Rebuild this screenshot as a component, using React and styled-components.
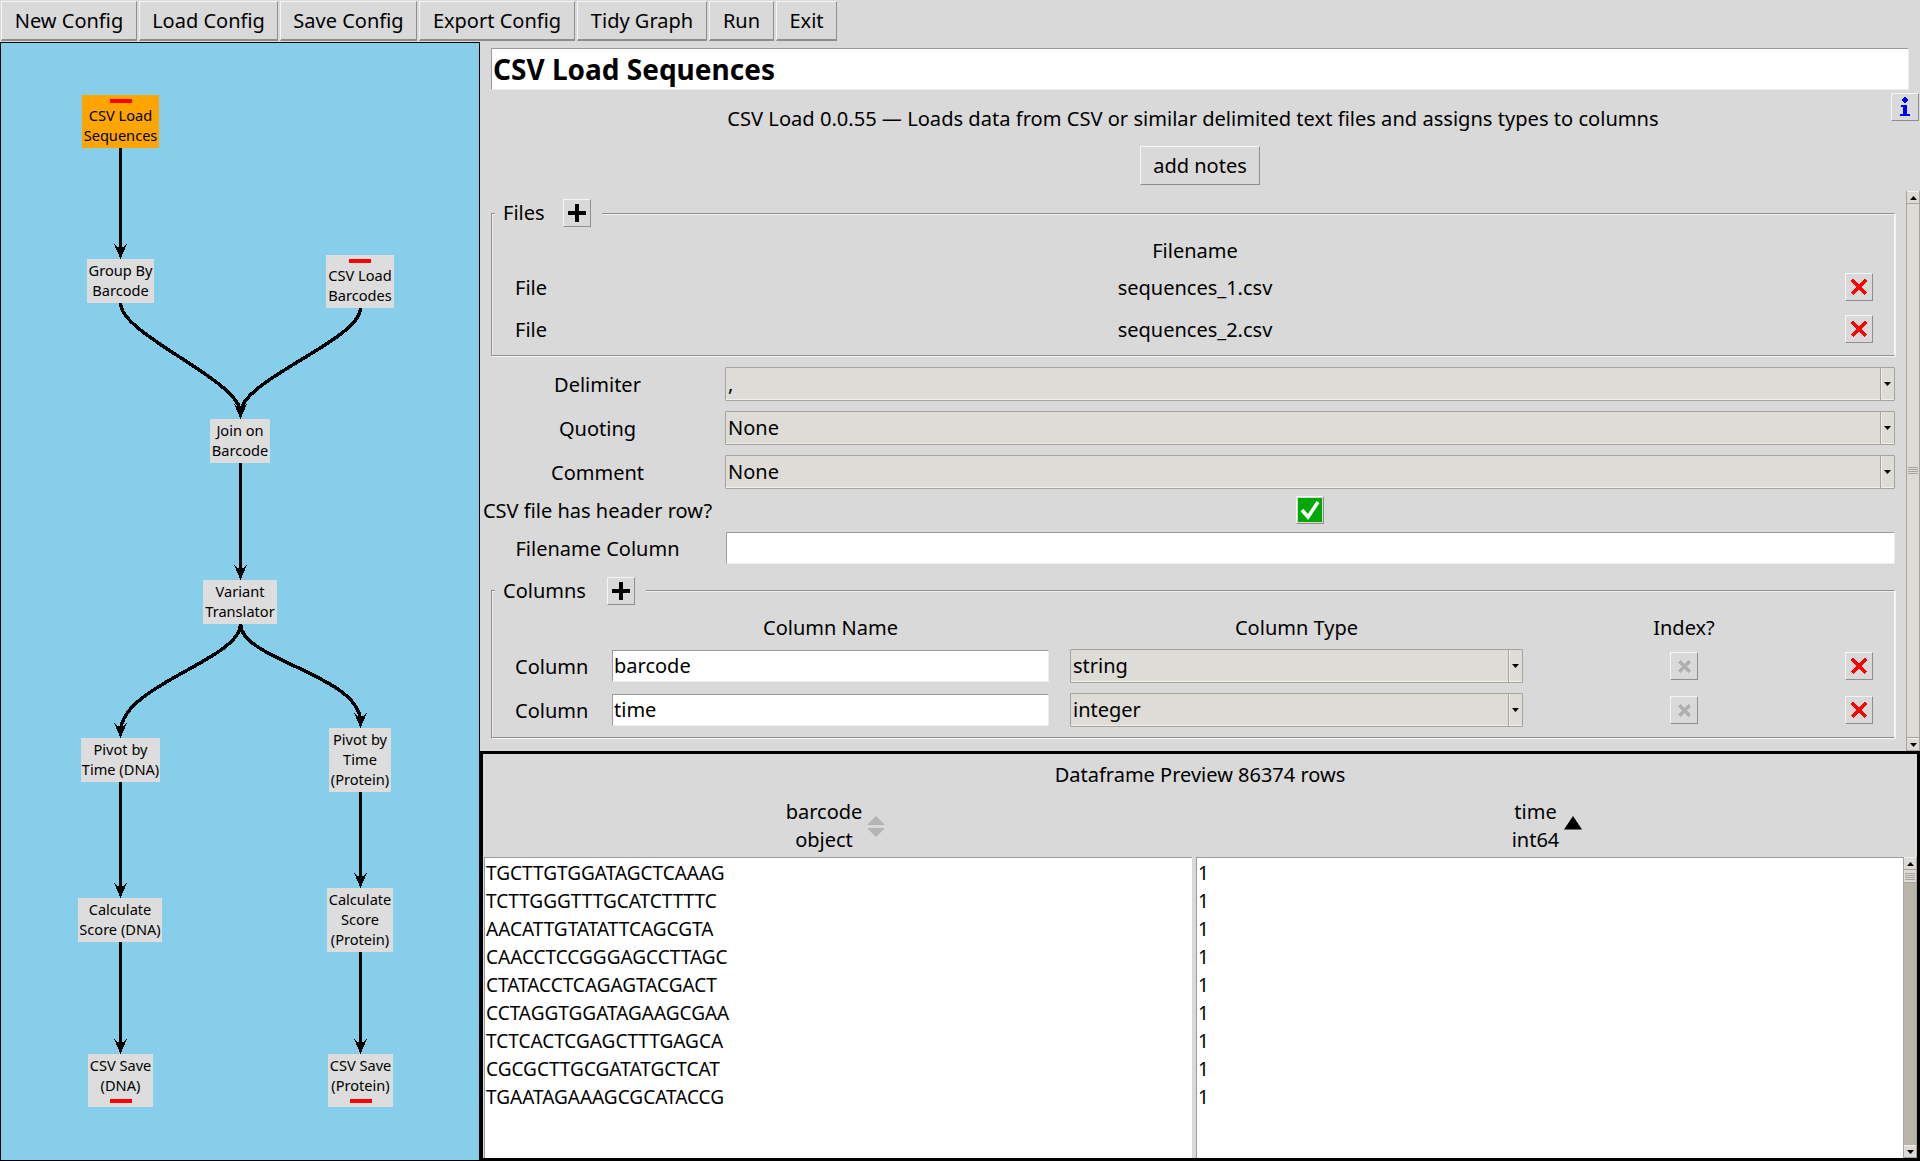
import React from 'react'
import styled, { createGlobalStyle } from 'styled-components'

const GlobalStyle = createGlobalStyle`
  html, body {
    margin: 0;
    padding: 0;
    background: #d9d9d9;
  }
  body {
    font-family: "Noto Sans", sans-serif;
    font-size: 20px;
    color: #000;
    overflow: hidden;
  }
`

const Page = styled.div`
  width: 1920px;
  height: 1161px;
  display: flex;
  flex-direction: column;
  background: #d9d9d9;
`

const Toolbar = styled.div`
  height: 42px;
  flex: none;
  display: flex;
  gap: 2px;
  padding: 1px 0 0 1px;
  box-sizing: border-box;
`

const raised = `
  border-style: solid;
  border-width: 1px;
  border-color: #f6f6f6 #8e8e8e #8e8e8e #f6f6f6;
  background: #d9d9d9;
  box-sizing: border-box;
`

const ToolButton = styled.div`
  ${raised}
  width: ${(p) => p.$w}px;
  height: 40px;
  border-bottom-width: 2px;
  display: flex;
  align-items: center;
  justify-content: center;
  line-height: 28px;
`

const Main = styled.div`
  flex: 1;
  display: flex;
  min-height: 0;
`

const GraphPanel = styled.div`
  position: relative;
  width: 480px;
  flex: none;
  background: #87ceeb;
  border: 1px solid #000;
  box-sizing: border-box;
  overflow: hidden;
`

const EdgeLayer = styled.svg`
  position: absolute;
  left: -1px;
  top: -1px;
`

const Node = styled.div`
  position: absolute;
  left: ${(p) => p.$x - 1}px;
  top: ${(p) => p.$y - 43}px;
  width: ${(p) => p.$w}px;
  height: ${(p) => p.$h}px;
  display: flex;
  flex-direction: column;
  align-items: center;
  padding-top: ${(p) => (p.$bar === 'top' ? 4 : 1)}px;
  box-sizing: border-box;
  background: ${(p) => (p.$active ? '#ffa500' : '#dddddd')};
  font-size: 14.6px;
  line-height: 20px;
  text-align: center;
  white-space: nowrap;
`

const NodeBar = styled.div`
  width: 22px;
  height: 4px;
  flex: none;
  background: #f00;
  margin: ${(p) => (p.$bottom ? '4px 0 0' : '0 0 2px')};
`

const RightColumn = styled.div`
  position: relative;
  flex: 1;
  min-width: 0;
  display: flex;
  flex-direction: column;
`

const TitleInput = styled.div`
  margin: 6px 11px 0;
  height: 42px;
  flex: none;
  background: #fff;
  border-style: solid;
  border-width: 1px;
  border-color: #9c9c9c #ececec #ececec #9c9c9c;
  box-sizing: border-box;
  padding-left: 1px;
  font-size: 28px;
  font-weight: 700;
  line-height: 40px;
`

const IconButton = styled.div`
  ${raised}
  width: 28px;
  height: 28px;
  flex: none;
  display: flex;
  align-items: center;
  justify-content: center;
  border-width: 1px;
`

const InfoSlot = styled.div`
  position: absolute;
  right: 1px;
  top: 51px;
`

const Description = styled.div`
  height: 28px;
  margin-top: 15px;
  flex: none;
  text-align: center;
  line-height: 28px;
  padding-right: 14px;
  font-size: 20.1px;
`

const NotesButton = styled.div`
  ${raised}
  width: 120px;
  height: 39px;
  flex: none;
  margin: 13px 0 0 660px;
  display: flex;
  align-items: center;
  justify-content: center;
`

const ConfigArea = styled.div`
  height: 560px;
  margin-top: 6px;
  flex: none;
  display: flex;
  overflow: hidden;
`

const ConfigBody = styled.div`
  flex: 1;
  min-width: 0;
  display: flex;
  flex-direction: column;
`

const Scrollbar = styled.div`
  width: 14px;
  flex: none;
  display: flex;
  flex-direction: column;
  box-sizing: border-box;
  background: ${(p) => (p.$dark ? '#b8b4aa' : '#dcdbd6')};
  border-left: 1px solid #a5a39c;
  border-right: 1px solid #a5a39c;
`

const ScrollStep = styled.div`
  height: 13px;
  flex: none;
  background: #dcdbd6;
  border-top: 1px solid #f2f1ee;
  border-bottom: 1px solid #a5a39c;
  box-sizing: border-box;
  display: flex;
  align-items: center;
  justify-content: center;
`

const ScrollThumb = styled.div`
  flex: ${(p) => (p.$long ? 1 : 'none')};
  height: ${(p) => (p.$long ? 'auto' : '13px')};
  display: flex;
  flex-direction: column;
  align-items: center;
  justify-content: center;
  gap: 1px;
  background: #dcdbd6;
  border-bottom: 1px solid #a5a39c;
  box-sizing: border-box;
`

const ScrollSpacer = styled.div`
  flex: 1;
`

const GripLine = styled.div`
  width: 10px;
  height: 1px;
  background: #a5a39c;
`

const Group = styled.div`
  position: relative;
  margin: ${(p) => p.$top}px 11px 0;
  padding: ${(p) => p.$pad};
  flex: none;
  border-style: solid;
  border-width: 1px;
  border-color: #8f8f8f #f6f6f6 #8f8f8f #8f8f8f;
  box-shadow: inset 1px 1px 0 #f0f0f0, 1px 1px 0 #f6f6f6;
`

const Legend = styled.div`
  position: absolute;
  left: 3px;
  top: ${(p) => p.$y}px;
  height: 28px;
  display: flex;
  align-items: center;
  gap: ${(p) => p.$gap}px;
  padding: 0 11px 0 8px;
  background: #d9d9d9;
  line-height: 28px;
`

const CellHeader = styled.div`
  grid-column: ${(p) => p.$col};
  height: 28px;
  margin-bottom: -3px;
  padding-left: ${(p) => p.$inset || 0}px;
  text-align: center;
  line-height: 28px;
`

const FileGrid = styled.div`
  display: grid;
  grid-template-columns: 70px 1fr 68px;
  row-gap: 14px;
  align-items: center;
`

const FileHeader = styled.div`
  grid-column: 2;
  height: 28px;
  margin-bottom: -6px;
  text-align: center;
  line-height: 28px;
`

const FileName = styled.div`
  text-align: center;
`

const EndCell = styled.div`
  display: flex;
  justify-content: flex-end;
`

const FormRow = styled.div`
  display: grid;
  grid-template-columns: 231px 1fr;
  column-gap: 12px;
  align-items: center;
  height: ${(p) => p.$h}px;
  margin: ${(p) => p.$top}px 11px 0 2px;
  flex: none;
`

const FormLabel = styled.div`
  text-align: center;
  white-space: nowrap;
`

const CheckCell = styled.div`
  display: flex;
  justify-content: center;
`

const CheckBox = styled.div`
  ${raised}
  width: 28px;
  height: 28px;
  display: flex;
  align-items: center;
  justify-content: center;
`

const Combo = styled.div`
  height: 34px;
  display: flex;
  background: #dddcd7;
  border-style: solid;
  border-width: 1px;
  border-color: #a5a39c;
  border-radius: 1px;
  box-sizing: border-box;
  box-shadow: inset 0 -1px 0 #f0efeb;
  margin-left: ${(p) => p.$inset || 0}px;
`

const ComboText = styled.div`
  flex: 1;
  padding-left: 2px;
  line-height: 32px;
`

const ComboArrow = styled.div`
  width: 13px;
  flex: none;
  display: flex;
  align-items: center;
  justify-content: center;
  border-left: 1px solid #a5a39c;
  box-shadow: inset 1px 0 0 #f0efeb;
`

const TextField = styled.div`
  height: 32px;
  margin-left: ${(p) => p.$inset || 0}px;
  background: #fff;
  border-style: solid;
  border-width: 1px;
  border-color: #9c9c9c #ececec #ececec #9c9c9c;
  box-sizing: border-box;
  padding-left: 1px;
  line-height: 30px;
`

const ColumnsGrid = styled.div`
  display: grid;
  grid-template-columns: 97px 437px 474px 1fr 28px;
  row-gap: 10px;
  align-items: center;
`

const IndexCell = styled.div`
  display: flex;
  justify-content: center;
`

const Preview = styled.div`
  flex: 1;
  min-height: 0;
  border: 3px solid #000;
  box-sizing: border-box;
  display: flex;
  flex-direction: column;
`

const PreviewTitle = styled.div`
  height: 45px;
  flex: none;
  text-align: center;
  line-height: 42px;
`

const PreviewColumns = styled.div`
  flex: 1;
  min-height: 0;
  display: grid;
  grid-template-columns: 708px 721px;
  column-gap: 4px;
  padding-left: 1px;
`

const PreviewColumn = styled.div`
  display: flex;
  flex-direction: column;
  min-height: 0;
`

const ColumnHead = styled.div`
  height: 58px;
  flex: none;
  display: flex;
  align-items: center;
  justify-content: center;
  gap: 5px;
  box-sizing: border-box;
  padding: 0 ${(p) => (p.$scroll ? 19 : 5)}px 4px 0;
`

const ColumnTitle = styled.div`
  text-align: center;
  line-height: 28px;
`

const ListWrap = styled.div`
  flex: 1;
  min-height: 0;
  display: flex;
`

const List = styled.div`
  flex: 1;
  min-width: 0;
  padding: 1px 0 0 1px;
  background: #fff;
  border-top: 1px solid #9c9c9c;
  border-left: 1px solid #9c9c9c;
  box-sizing: border-box;
  overflow: hidden;
`

const ListRow = styled.div`
  height: 28px;
  line-height: 28px;
  font-size: 19px;
`

const Plus = () => (
  <svg width="18" height="18" viewBox="0 0 18 18">
    <path d="M7 0h4v7h7v4h-7v7H7v-7H0V7h7z" fill="#000" />
  </svg>
)

const Cross = ({ muted }) => (
  <svg width={muted ? 13 : 18} height={muted ? 13 : 18} viewBox="0 0 18 18" shapeRendering="crispEdges">
    <path
      d="M2 2L16 16M16 2L2 16"
      stroke={muted ? '#b0b0b0' : '#f00'}
      strokeWidth={muted ? 5.5 : 3.6}
      fill="none"
    />
  </svg>
)

const Info = () => (
  <svg width="14" height="20" viewBox="0 0 14 20" shapeRendering="crispEdges">
    <circle cx="7" cy="3" r="2.6" fill="#00f" />
    <path d="M3 7.5h6v9h2.5V19H2v-2.5h3v-6.5H3z" fill="#00f" />
  </svg>
)

const Check = () => (
  <svg width="24" height="24" viewBox="0 0 24 24">
    <rect width="24" height="24" fill="#00a800" />
    <path d="M4 12l6 7L20 4" stroke="#fff" strokeWidth="3.6" fill="none" />
  </svg>
)

const Caret = () => (
  <svg width="7" height="4" viewBox="0 0 7 4">
    <path d="M0 0h7L3.5 4z" fill="#000" />
  </svg>
)

const CaretUp = () => (
  <svg width="7" height="4" viewBox="0 0 7 4">
    <path d="M0 4h7L3.5 0z" fill="#000" />
  </svg>
)

const SortIcon = ({ active }) => (
  <svg width="18" height="21" viewBox="0 0 18 21">
    <path d="M9 0l9 9H0z" fill={active ? '#000' : '#b4b4b4'} transform={active ? 'scale(1 1.5)' : undefined} />
    {!active && <path d="M0 12h18l-9 9z" fill="#b4b4b4" />}
  </svg>
)

const ComboBox = ({ children, inset }) => (
  <Combo $inset={inset}>
    <ComboText>{children}</ComboText>
    <ComboArrow>
      <Caret />
    </ComboArrow>
  </Combo>
)

const Grip = () => (
  <>
    <GripLine />
    <GripLine />
    <GripLine />
    <GripLine />
  </>
)

const nodes = [
  { x: 82, y: 95, w: 77, h: 53, lines: ['CSV Load', 'Sequences'], bar: 'top', active: true },
  { x: 87, y: 259, w: 67, h: 44, lines: ['Group By', 'Barcode'] },
  { x: 326, y: 255, w: 68, h: 53, lines: ['CSV Load', 'Barcodes'], bar: 'top' },
  { x: 210, y: 419, w: 60, h: 44, lines: ['Join on', 'Barcode'] },
  { x: 203, y: 580, w: 74, h: 44, lines: ['Variant', 'Translator'] },
  { x: 81, y: 738, w: 79, h: 44, lines: ['Pivot by', 'Time (DNA)'] },
  { x: 329, y: 728, w: 62, h: 64, lines: ['Pivot by', 'Time', '(Protein)'] },
  { x: 78, y: 898, w: 84, h: 44, lines: ['Calculate', 'Score (DNA)'] },
  { x: 327, y: 888, w: 66, h: 64, lines: ['Calculate', 'Score', '(Protein)'] },
  { x: 88, y: 1054, w: 65, h: 53, lines: ['CSV Save', '(DNA)'], bar: 'bottom' },
  { x: 328, y: 1054, w: 65, h: 53, lines: ['CSV Save', '(Protein)'], bar: 'bottom' },
]

const edges = [
  'M120.5 148V253',
  'M120.5 303C120.5 335 240.5 380 240.5 413',
  'M360.5 308C360.5 340 240.5 380 240.5 413',
  'M240.5 463V574',
  'M240.5 624C240.5 660 120.5 685 120.5 732',
  'M240.5 624C240.5 660 360.5 675 360.5 722',
  'M120.5 782V892',
  'M360.5 792V882',
  'M120.5 942V1048',
  'M360.5 952V1048',
]

const sequences = [
  'TGCTTGTGGATAGCTCAAAG',
  'TCTTGGGTTTGCATCTTTTC',
  'AACATTGTATATTCAGCGTA',
  'CAACCTCCGGGAGCCTTAGC',
  'CTATACCTCAGAGTACGACT',
  'CCTAGGTGGATAGAAGCGAA',
  'TCTCACTCGAGCTTTGAGCA',
  'CGCGCTTGCGATATGCTCAT',
  'TGAATAGAAAGCGCATACCG',
]

const Graph = () => (
  <GraphPanel>
    <EdgeLayer width="480" height="1119" viewBox="0 42 480 1119" shapeRendering="crispEdges">
      <defs>
        <marker id="head" markerUnits="userSpaceOnUse" markerWidth="16" markerHeight="14" refX="9" refY="7" orient="auto">
          <path d="M15 7L0 .5L5 7L0 13.5z" fill="#000" />
        </marker>
      </defs>
      {edges.map((d) => (
        <path key={d} d={d} stroke="#000" strokeWidth="3.5" fill="none" markerEnd="url(#head)" />
      ))}
    </EdgeLayer>
    {nodes.map((n) => (
      <Node key={n.lines.join()} $x={n.x} $y={n.y} $w={n.w} $h={n.h} $bar={n.bar} $active={n.active}>
        {n.bar === 'top' && <NodeBar />}
        {n.lines.map((l) => (
          <div key={l}>{l}</div>
        ))}
        {n.bar === 'bottom' && <NodeBar $bottom />}
      </Node>
    ))}
  </GraphPanel>
)

const App = () => (
  <Page>
    <GlobalStyle />
    <Toolbar>
      <ToolButton $w={136}>New Config</ToolButton>
      <ToolButton $w={139}>Load Config</ToolButton>
      <ToolButton $w={137}>Save Config</ToolButton>
      <ToolButton $w={156}>Export Config</ToolButton>
      <ToolButton $w={130}>Tidy Graph</ToolButton>
      <ToolButton $w={65}>Run</ToolButton>
      <ToolButton $w={61}>Exit</ToolButton>
    </Toolbar>
    <Main>
      <Graph />
      <RightColumn>
        <TitleInput>CSV Load Sequences</TitleInput>
        <InfoSlot>
          <IconButton>
            <Info />
          </IconButton>
        </InfoSlot>
        <Description>
          CSV Load 0.0.55 — Loads data from CSV or similar delimited text files and assigns types to columns
        </Description>
        <NotesButton>add notes</NotesButton>
        <ConfigArea>
          <ConfigBody>
            <Group $top={22} $pad="23px 21px 12px 23px">
              <Legend $y={-15} $gap={18}>
                Files
                <IconButton>
                  <Plus />
                </IconButton>
              </Legend>
              <FileGrid>
                <FileHeader>Filename</FileHeader>
                <div />
                <div>File</div>
                <FileName>sequences_1.csv</FileName>
                <EndCell>
                  <IconButton>
                    <Cross />
                  </IconButton>
                </EndCell>
                <div>File</div>
                <FileName>sequences_2.csv</FileName>
                <EndCell>
                  <IconButton>
                    <Cross />
                  </IconButton>
                </EndCell>
              </FileGrid>
            </Group>
            <FormRow $h={34} $top={11}>
              <FormLabel>Delimiter</FormLabel>
              <ComboBox>,</ComboBox>
            </FormRow>
            <FormRow $h={34} $top={10}>
              <FormLabel>Quoting</FormLabel>
              <ComboBox>None</ComboBox>
            </FormRow>
            <FormRow $h={34} $top={10}>
              <FormLabel>Comment</FormLabel>
              <ComboBox>None</ComboBox>
            </FormRow>
            <FormRow $h={28} $top={7}>
              <FormLabel>CSV file has header row?</FormLabel>
              <CheckCell>
                <CheckBox>
                  <Check />
                </CheckBox>
              </CheckCell>
            </FormRow>
            <FormRow $h={32} $top={8}>
              <FormLabel>Filename Column</FormLabel>
              <TextField $inset={1} />
            </FormRow>
            <Group $top={26} $pad="23px 21px 10px 23px">
              <Legend $y={-14} $gap={21}>
                Columns
                <IconButton>
                  <Plus />
                </IconButton>
              </Legend>
              <ColumnsGrid>
                <CellHeader $col={2}>Column Name</CellHeader>
                <CellHeader $col={3} $inset={21}>Column Type</CellHeader>
                <CellHeader $col={4}>Index?</CellHeader>
                <div />
                <div>Column</div>
                <TextField>barcode</TextField>
                <ComboBox inset={21}>string</ComboBox>
                <IndexCell>
                  <IconButton>
                    <Cross muted />
                  </IconButton>
                </IndexCell>
                <IconButton>
                  <Cross />
                </IconButton>
                <div>Column</div>
                <TextField>time</TextField>
                <ComboBox inset={21}>integer</ComboBox>
                <IndexCell>
                  <IconButton>
                    <Cross muted />
                  </IconButton>
                </IndexCell>
                <IconButton>
                  <Cross />
                </IconButton>
              </ColumnsGrid>
            </Group>
          </ConfigBody>
          <Scrollbar>
            <ScrollStep>
              <CaretUp />
            </ScrollStep>
            <ScrollThumb $long>
              <Grip />
            </ScrollThumb>
            <ScrollStep>
              <Caret />
            </ScrollStep>
          </Scrollbar>
        </ConfigArea>
        <Preview>
          <PreviewTitle>Dataframe Preview 86374 rows</PreviewTitle>
          <PreviewColumns>
            <PreviewColumn>
              <ColumnHead>
                <ColumnTitle>
                  barcode
                  <br />
                  object
                </ColumnTitle>
                <SortIcon />
              </ColumnHead>
              <ListWrap>
                <List>
                  {sequences.map((s) => (
                    <ListRow key={s}>{s}</ListRow>
                  ))}
                </List>
              </ListWrap>
            </PreviewColumn>
            <PreviewColumn>
              <ColumnHead $scroll>
                <ColumnTitle>
                  time
                  <br />
                  int64
                </ColumnTitle>
                <SortIcon active />
              </ColumnHead>
              <ListWrap>
                <List>
                  {sequences.map((s) => (
                    <ListRow key={s}>1</ListRow>
                  ))}
                </List>
                <Scrollbar $dark>
                  <ScrollStep>
                    <CaretUp />
                  </ScrollStep>
                  <ScrollThumb>
                    <Grip />
                  </ScrollThumb>
                  <ScrollSpacer />
                  <ScrollStep>
                    <Caret />
                  </ScrollStep>
                </Scrollbar>
              </ListWrap>
            </PreviewColumn>
          </PreviewColumns>
        </Preview>
      </RightColumn>
    </Main>
  </Page>
)

export default App
